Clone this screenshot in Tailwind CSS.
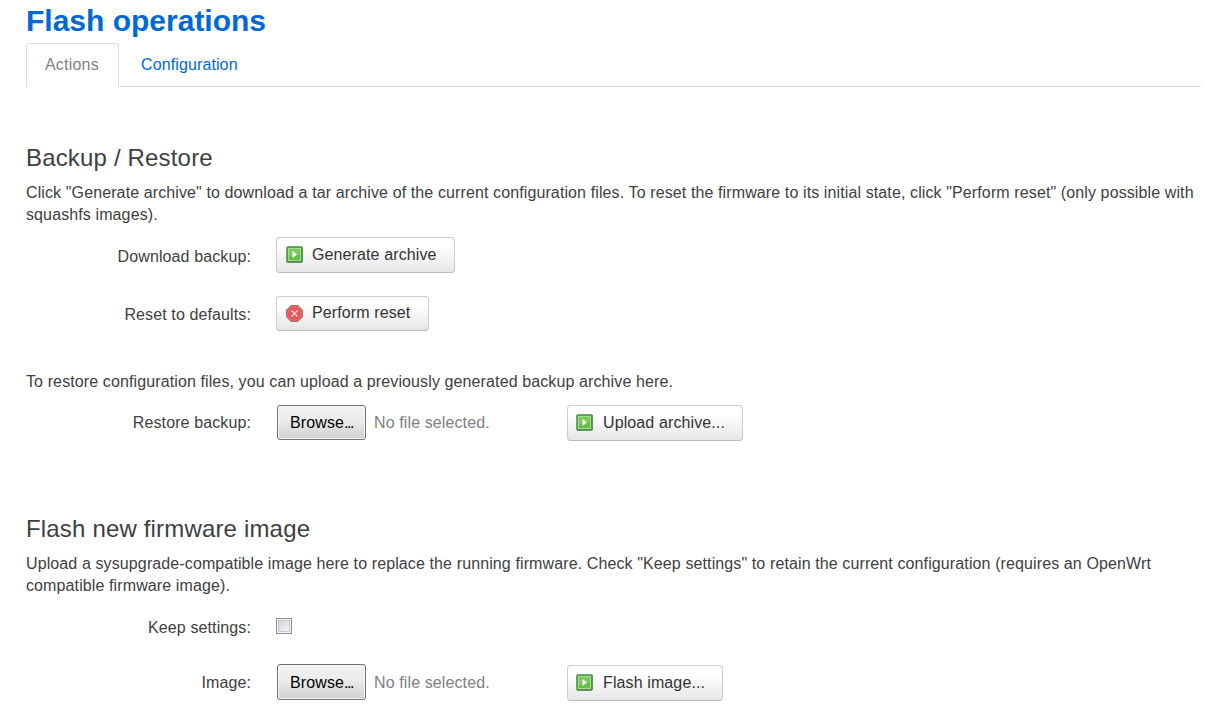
<!DOCTYPE html>
<html lang="en">
<head>
<meta charset="utf-8">
<title>Flash operations</title>
<script src="https://cdn.jsdelivr.net/npm/@tailwindcss/browser@4"></script>
</head>
<body class="h-[714px] overflow-hidden bg-white pl-[26px] font-['Liberation_Sans',Arial,sans-serif] text-[16px] leading-[22px] tracking-[0.113px] text-[#404040]">
<svg class="hidden">
  <symbol id="go" viewBox="0 0 17 17">
    <rect x=".5" y=".5" width="16" height="16" rx="1.5" fill="#5a9c52" stroke="#73a66c"/>
    <path d="M1 16h15V1" fill="none" stroke="#4a8446"/>
    <rect x="2.5" y="2.5" width="12" height="12" fill="#62c044" stroke="#a5dc90"/>
    <path d="M3 3h11v5L3 11z" fill="#7acb5e"/>
    <path d="M6.5 5v7l4.5-3.5z" fill="#fff"/>
  </symbol>
  <symbol id="stop" viewBox="0 0 17 17">
    <path d="M5 .6h7L16.4 5v7L12 16.4H5L.6 12V5z" fill="#d9585a" stroke="#a86a6b"/>
    <path d="M5.5 2h6L15 5.5v6L11.5 15h-6L2 11.5v-6z" fill="#e45557" stroke="#ea8080" stroke-width=".8"/>
    <path d="M5.5 5.5l6 6m0-6l-6 6" stroke="#fbd5d5" stroke-width="1.4"/>
  </symbol>
</svg>
<h1 class="h-[43px] text-[30px] leading-[42px] font-bold tracking-normal text-[#0069d6]">Flash operations</h1>
<nav class="flex h-[44px] w-[1175px] border-b border-[#ddd] leading-[42px]">
  <a class="h-[44px] w-[93px] rounded-t-[4px] border border-b-0 border-[#ddd] bg-white pl-[18px] tracking-[0.2px] text-[#808080]">Actions</a>
  <a class="ml-[22px] pt-px text-[#0069d6]">Configuration</a>
</nav>
<main>
  <section class="h-[424px] pt-[53px]">
    <h2 class="h-[42px] text-[24px] leading-[36px] tracking-[0.17px]">Backup / Restore</h2>
    <p class="whitespace-nowrap">Click "Generate archive" to download a tar archive of the current configuration files. To reset the firmware to its initial state, click "Perform reset" (only possible with<br>squashfs images).</p>
    <div class="mt-[11px] flex h-[59px]">
      <label class="w-[225px] pt-[9px] text-right">Download backup:</label>
      <button class="ml-[25px] flex h-[36px] w-[179px] items-start rounded-[4px] border border-[#ccc] border-b-[#bbb] bg-linear-to-b from-white from-25% to-[#e6e6e6] pt-[6px] pl-[9px] text-[#333]"><svg class="mt-[2px] mr-[9px] h-[17px] w-[17px]"><use href="#go"/></svg>Generate archive</button>
    </div>
    <div class="flex h-[75px]">
      <label class="w-[225px] pt-[8px] text-right">Reset to defaults:</label>
      <button class="ml-[25px] flex h-[35px] w-[153px] items-start rounded-[4px] border border-[#ccc] border-b-[#bbb] bg-linear-to-b from-white from-25% to-[#e6e6e6] pt-[5px] pl-[9px] text-[#333]"><svg class="mt-[3px] mr-[9px] h-[17px] w-[17px]"><use href="#stop"/></svg>Perform reset</button>
    </div>
    <p>To restore configuration files, you can upload a previously generated backup archive here.</p>
    <div class="mt-[12px] flex">
      <label class="w-[225px] pt-[7px] text-right">Restore backup:</label>
      <button class="ml-[26px] flex h-[35px] w-[89px] items-start rounded-[3px] border border-[#707070] bg-linear-to-b from-[#f2f2f2] from-0% via-[#ebebeb] via-47% to-[#cfcfcf] pt-[6px] pl-[12px] text-black shadow-[inset_0_0_0_1px_#f8f8f8]">Browse<span class="tracking-[-1.4px]">...</span></button>
      <span class="w-[201px] pt-[7px] pl-[8px] text-[#808080]">No file selected.</span>
      <button class="flex h-[36px] w-[176px] items-start rounded-[4px] border border-[#ccc] border-b-[#bbb] bg-linear-to-b from-white from-25% to-[#e6e6e6] pt-[6px] pl-[8px] text-[#333]"><svg class="mt-[2px] mr-[10px] h-[17px] w-[17px]"><use href="#go"/></svg>Upload archive...</button>
    </div>
  </section>
  <section>
    <h2 class="h-[42px] text-[24px] leading-[36px] tracking-[0.17px]">Flash new firmware image</h2>
    <p class="whitespace-nowrap">Upload a sysupgrade-compatible image here to replace the running firmware. Check "Keep settings" to retain the current configuration (requires an OpenWrt<br>compatible firmware image).</p>
    <div class="flex h-[67px] pt-[20px]">
      <label class="w-[225px] text-right">Keep settings:</label>
      <span class="mt-px ml-[25px] h-[16px] w-[16px] border border-[#8e8f8f] bg-[#f4f4f4] p-px"><span class="block h-full w-full border border-[#c6cad0] bg-linear-to-br from-[#cdd2d9] to-[#f6f6f6]"></span></span>
    </div>
    <div class="flex">
      <label class="w-[225px] pt-[8px] text-right">Image:</label>
      <button class="ml-[26px] flex h-[36px] w-[89px] items-start rounded-[3px] border border-[#707070] bg-linear-to-b from-[#f2f2f2] from-0% via-[#ebebeb] via-47% to-[#cfcfcf] pt-[7px] pl-[12px] text-black shadow-[inset_0_0_0_1px_#f8f8f8]">Browse<span class="tracking-[-1.4px]">...</span></button>
      <span class="w-[201px] pt-[8px] pl-[8px] text-[#808080]">No file selected.</span>
      <button class="mt-px flex h-[36px] w-[156px] items-start rounded-[4px] border border-[#ccc] border-b-[#bbb] bg-linear-to-b from-white from-25% to-[#e6e6e6] pt-[6px] pl-[8px] text-[#333]"><svg class="mt-[2px] mr-[10px] h-[17px] w-[17px]"><use href="#go"/></svg>Flash image...</button>
    </div>
  </section>
</main>
</body>
</html>
